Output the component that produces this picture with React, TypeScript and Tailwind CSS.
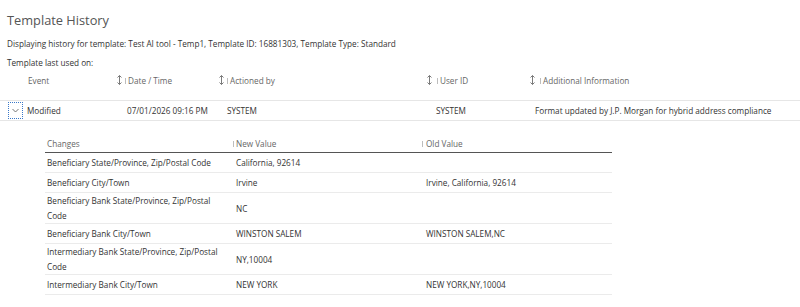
import React from "react";

const SortIcon = () => (
  <svg width="5" height="10" viewBox="0 0 5 10" className="shrink-0">
    <path d="M2.5 0.5 V9.5" stroke="#7a7a7a" strokeWidth="1" />
    <path d="M0.5 2.5 L2.5 0.5 L4.5 2.5" stroke="#7a7a7a" strokeWidth="1" fill="none" />
    <path d="M0.5 7.5 L2.5 9.5 L4.5 7.5" stroke="#7a7a7a" strokeWidth="1" fill="none" />
  </svg>
);

const Sep = () => <span className="inline-block w-px h-[6px] bg-[#bdbdbd] shrink-0" />;

const changes: [string, string, string][] = [
  ["Beneficiary State/Province, Zip/Postal Code", "California, 92614", ""],
  ["Beneficiary City/Town", "Irvine", "Irvine, California, 92614"],
  ["Beneficiary Bank State/Province, Zip/Postal Code", "NC", ""],
  ["Beneficiary Bank City/Town", "WINSTON SALEM", "WINSTON SALEM,NC"],
  ["Intermediary Bank State/Province, Zip/Postal Code", "NY,10004", ""],
  ["Intermediary Bank City/Town", "NEW YORK", "NEW YORK,NY,10004"],
];

export default function App() {
  return (
    <div
      className="w-[800px] h-[307px] bg-white overflow-hidden text-[8.2px] leading-[15px] text-[#333]"
      style={{ fontFamily: '"Open Sans", sans-serif' }}
    >
      <div className="pt-[11px] pl-[7px] text-[12.8px] leading-[18px] text-[#555]">Template History</div>
      <div className="pl-[7px] mt-[7px]">Displaying history for template: Test AI tool - Temp1, Template ID: 16881303, Template Type: Standard</div>
      <div className="pl-[7px] mt-[4px]">Template last used on:</div>

      {/* main header */}
      <div className="flex items-center h-[20px] text-[#666]">
        <div className="w-[117px] pl-[28px]">Event</div>
        <div className="w-[102px] flex items-center">
          <SortIcon />
          <span className="ml-[3px]"><Sep /></span>
          <span className="ml-[2px]">Date / Time</span>
        </div>
        <div className="w-[208px] flex items-center">
          <SortIcon />
          <span className="ml-[3px]"><Sep /></span>
          <span className="ml-[2px]">Actioned by</span>
        </div>
        <div className="w-[103px] flex items-center">
          <SortIcon />
          <span className="ml-[5px]"><Sep /></span>
          <span className="ml-[2px]">User ID</span>
        </div>
        <div className="flex-1 flex items-center">
          <SortIcon />
          <span className="ml-[5px]"><Sep /></span>
          <span className="ml-[2px]">Additional Information</span>
        </div>
      </div>

      {/* main row */}
      <div className="mt-[10px] flex items-center h-[21px] border-t border-b border-[#e6e6e6]">
        <div className="w-[117px] pl-[8px] flex items-center">
          <div className="w-[15px] h-[17px] border border-dotted border-[#3a78c9] flex items-center justify-center">
            <svg width="7" height="5" viewBox="0 0 7 5">
              <path d="M0.5 1 L3.5 4 L6.5 1" stroke="#666" strokeWidth="0.9" fill="none" />
            </svg>
          </div>
          <span className="ml-[4px]">Modified</span>
        </div>
        <div className="w-[102px] pl-[10px]">07/01/2026 09:16 PM</div>
        <div className="w-[208px] pl-[8px]">SYSTEM</div>
        <div className="w-[103px] pl-[9px]">SYSTEM</div>
        <div className="flex-1 pl-[5px]">Format updated by J.P. Morgan for hybrid address compliance</div>
      </div>

      {/* sub table */}
      <div className="ml-[45px] w-[567px] mt-[13px]">
        <div className="flex items-center h-[19px] pt-[1px] border-b border-[#555] text-[#666]">
          <div className="w-[188px] pl-[2px]">Changes</div>
          <div className="w-[189px] flex items-center">
            <Sep />
            <span className="ml-[2px]">New Value</span>
          </div>
          <div className="flex-1 flex items-center">
            <Sep />
            <span className="ml-[3px]">Old Value</span>
          </div>
        </div>
        {changes.map(([c, n, o], i) => (
          <div key={i} className="flex items-center min-h-[20px] border-b border-[#ebebeb]">
            <div className="w-[188px] pl-[2px] pr-[14px]">{c}</div>
            <div className="w-[189px] pl-[3px]">{n}</div>
            <div className="flex-1 pl-[4px]">{o}</div>
          </div>
        ))}
      </div>
    </div>
  );
}
